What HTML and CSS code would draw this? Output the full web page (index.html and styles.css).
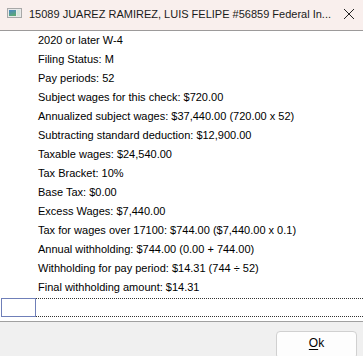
FILE: index.html
```html
<!DOCTYPE html>
<html lang="en">
<head>
    <meta charset="UTF-8">
    <title>Federal Income Tax</title>
    <link rel="stylesheet" href="styles.css">
</head>
<body>
    <div class="window">
        <div class="titlebar">
            <svg class="app-icon" width="15" height="10" viewBox="0 0 15 10">
                <defs>
                    <linearGradient id="pane" x1="0" y1="0" x2="0.4" y2="1">
                        <stop offset="0" stop-color="#4a86c8"/>
                        <stop offset="1" stop-color="#5aa877"/>
                    </linearGradient>
                </defs>
                <rect x="0.5" y="0.5" width="14" height="9" fill="#eaeaea" stroke="#a8a8a8"/>
                <rect x="2" y="2" width="7" height="6" fill="url(#pane)"/>
                <rect x="10" y="2" width="3" height="6" fill="#d6e6dc"/>
            </svg>
            <span class="title">15089 JUAREZ RAMIREZ, LUIS FELIPE #56859 Federal In...</span>
            <svg class="close" width="12" height="12" viewBox="0 0 12 12">
                <path d="M1 1 L11 11 M11 1 L1 11" stroke="#222" stroke-width="1" fill="none"/>
            </svg>
        </div>

        <div class="content">
            <ul class="lines">
                <li>2020 or later W-4</li>
                <li>Filing Status: M</li>
                <li>Pay periods: 52</li>
                <li>Subject wages for this check: $720.00</li>
                <li>Annualized subject wages: $37,440.00 (720.00 x 52)</li>
                <li>Subtracting standard deduction: $12,900.00</li>
                <li>Taxable wages: $24,540.00</li>
                <li>Tax Bracket: 10%</li>
                <li>Base Tax: $0.00</li>
                <li>Excess Wages: $7,440.00</li>
                <li>Tax for wages over 17100: $744.00 ($7,440.00 x 0.1)</li>
                <li>Annual withholding: $744.00 (0.00 + 744.00)</li>
                <li>Withholding for pay period: $14.31 (744 ÷ 52)</li>
                <li>Final withholding amount: $14.31</li>
            </ul>
            <div class="new-row">
                <div class="row-header"></div>
                <div class="row-cell"></div>
            </div>
        </div>

        <div class="footer">
            <button class="ok-button"><u>O</u>k</button>
        </div>
    </div>
</body>
</html>
```

FILE: styles.css
```css
/* ventana de detalle */

html, body {
  margin: 0;
  padding: 0;
  background: #ffffff;
}
body {
  font-family: "Liberation Sans", Arial, sans-serif;
  font-size: 11px;
  color: #000000;
}
.window {
  display: flex;
  flex-direction: column;
  width: 363px;
  height: 356px;
  overflow: hidden;
}
.titlebar {
  display: flex;
  align-items: center;
  height: 30px;
  background-color: #f9efed;
  border-bottom: 1px solid #9c9a9a;
  flex-shrink: 0;
}
.app-icon {
  margin-left: 7px;
  margin-top: -4px;
  flex-shrink: 0;
}
.title {
  margin-left: 7px;
  margin-top: -2px;
  white-space: nowrap;
  overflow: hidden;
  flex: 1;
  color: #1a1a1a;
}
.close {
  margin-right: 8px;
  margin-top: -2px;
  flex-shrink: 0;
}
.content {
  height: 290px;
  flex-shrink: 0;
  background: #ffffff;
}
.lines {
  list-style: none;
  margin: 0;
  padding: 0 0 0 38px;
}
.lines li {
  height: 19px;
  line-height: 19px;
  white-space: nowrap;
}
.new-row {
  display: flex;
  height: 19px;
  margin-top: 1px;
}
.row-header {
  width: 33px;
  margin-left: 1px;
  border: 1px solid #6f7fb8;
}
.row-cell {
  flex: 1;
  border-top: 1px dotted #333;
  border-bottom: 1px dotted #333;
}
.footer {
  flex: 1;
  display: flex;
  justify-content: flex-end;
  align-items: flex-start;
  background-color: #f0f0f0;
  border-top: 1px solid #a0a0a0;
  padding: 9px 6px 0 0;
}
.ok-button {
  width: 81px;
  height: 28px;
  background-color: #fdfdfd;
  border: 1px solid #d0d0d0;
  border-radius: 4px;
  font-family: "Liberation Sans", Arial, sans-serif;
  font-size: 12px;
  color: #000;
  padding: 0 0 4px 0;
}
.ok-button u {
  text-underline-offset: 2px;
}
```
